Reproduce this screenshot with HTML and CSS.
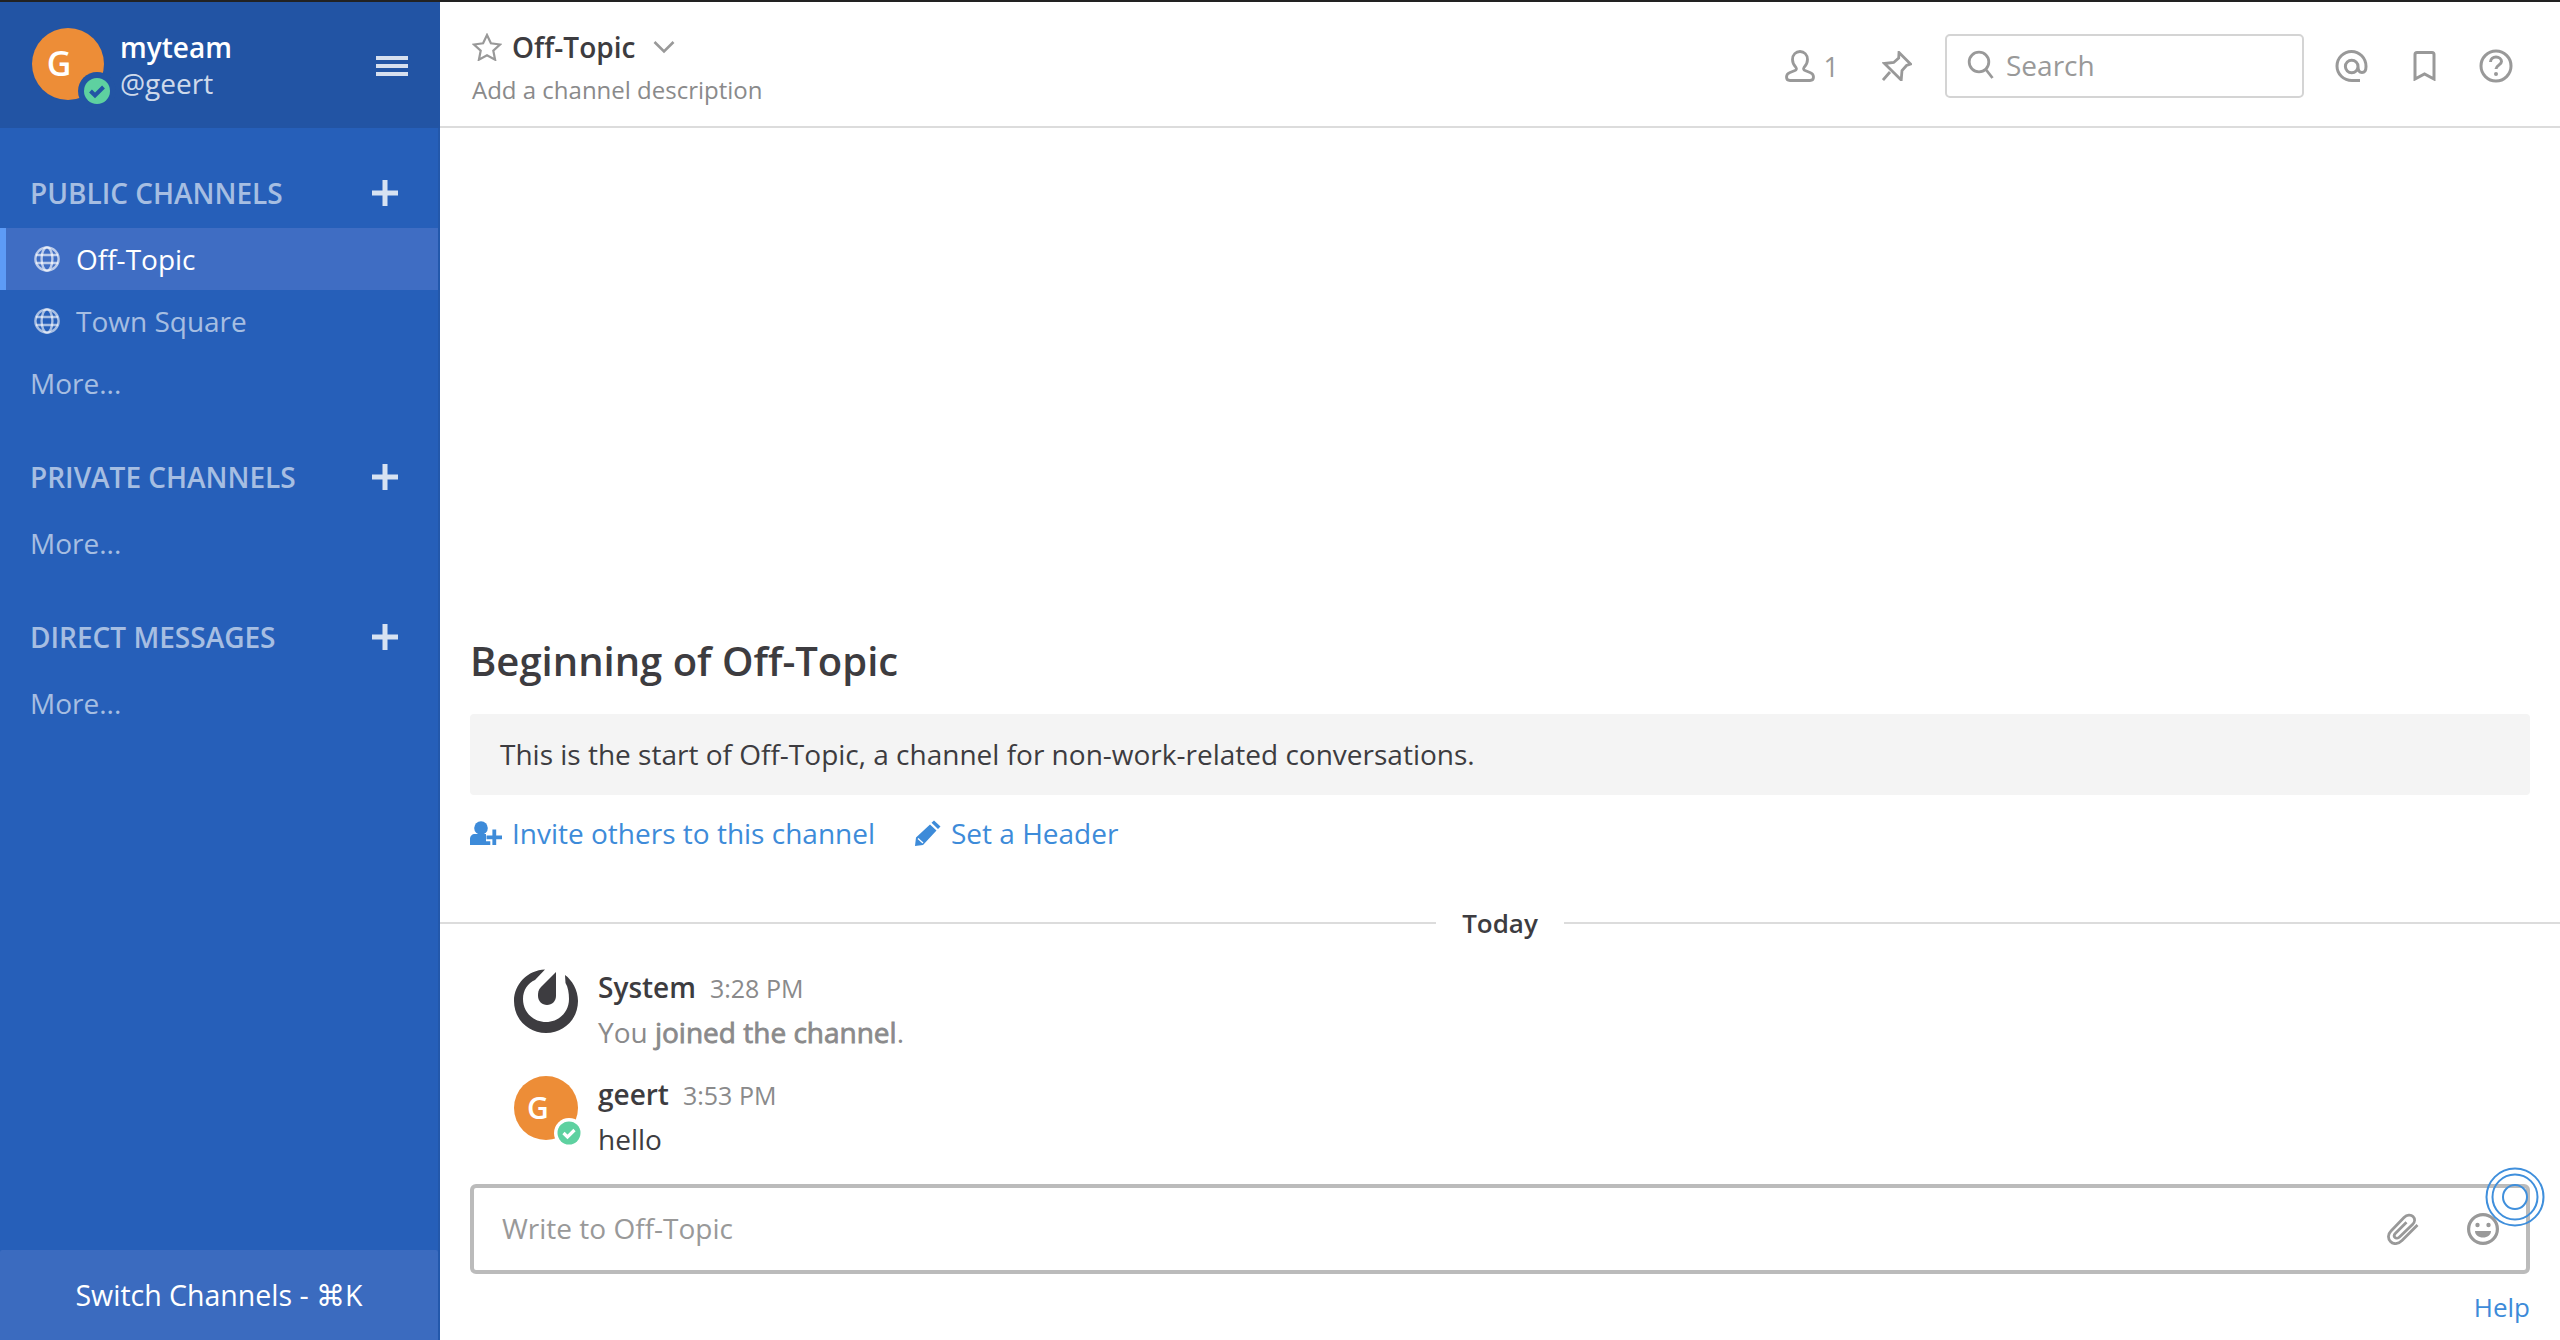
FILE: index.html
```html
<!DOCTYPE html>
<html lang="en">
<head>
<meta charset="utf-8">
<title>Off-Topic - myteam</title>
<link rel="stylesheet" href="styles.css">
</head>
<body>
<div class="app">
  <aside class="sidebar">
    <header class="side-head">
      <div class="avatar avatar-lg">
        <span class="avatar-letter">G</span>
        <svg class="badge badge-lg" viewBox="0 0 38 38"><circle cx="19" cy="19" r="19" fill="#2254a4"/><circle cx="19" cy="19" r="13" fill="#5ed1a0"/><path d="M12.500 19l4.500 4.500 8.500-8.500" fill="none" stroke="#2254a4" stroke-width="4"/></svg>
      </div>
      <div class="side-names">
        <div class="team">myteam</div>
        <div class="user">@geert</div>
      </div>
      <div class="burger"><span></span><span></span><span></span></div>
    </header>
    <nav class="side-nav">
      <section class="group">
        <div class="group-title"><span>PUBLIC CHANNELS</span><svg class="plus" viewBox="0 0 26 26"><path d="M13 0v26M0 13h26" stroke="currentColor" stroke-width="5"/></svg></div>
        <a class="chan chan-active">
          <svg class="globe" viewBox="0 0 26 26"><g fill="none" stroke="currentColor" stroke-width="2.400"><circle cx="13" cy="13" r="11.600"/><ellipse cx="13" cy="13" rx="5.400" ry="11.600"/><path d="M2 9h22M2 17h22"/></g></svg>
          <span>Off-Topic</span>
        </a>
        <a class="chan">
          <svg class="globe" viewBox="0 0 26 26"><g fill="none" stroke="currentColor" stroke-width="2.400"><circle cx="13" cy="13" r="11.600"/><ellipse cx="13" cy="13" rx="5.400" ry="11.600"/><path d="M2 9h22M2 17h22"/></g></svg>
          <span>Town Square</span>
        </a>
        <a class="more">More...</a>
      </section>
      <section class="group">
        <div class="group-title"><span>PRIVATE CHANNELS</span><svg class="plus" viewBox="0 0 26 26"><path d="M13 0v26M0 13h26" stroke="currentColor" stroke-width="5"/></svg></div>
        <a class="more">More...</a>
      </section>
      <section class="group">
        <div class="group-title"><span>DIRECT MESSAGES</span><svg class="plus" viewBox="0 0 26 26"><path d="M13 0v26M0 13h26" stroke="currentColor" stroke-width="5"/></svg></div>
        <a class="more">More...</a>
      </section>
    </nav>
    <footer class="switcher">Switch Channels - ⌘K</footer>
  </aside>

  <main class="main">
    <header class="chan-head">
      <div class="chan-info">
        <div class="chan-title">
          <svg class="star" viewBox="0 0 30 28"><path d="M15 2l3.900 8.300 9.100 1.200-6.700 6.200 1.800 9L15 22.200 6.900 26.700l1.800-9L2 11.500l9.100-1.200z" fill="none" stroke="#999" stroke-width="2.200"/></svg>
          <span class="chan-name">Off-Topic</span>
          <svg class="caret" viewBox="0 0 22 14"><path d="M1.500 2l9.500 9.500L20.500 2" fill="none" stroke="#999" stroke-width="2.600"/></svg>
        </div>
        <div class="chan-desc">Add a channel description</div>
      </div>
      <div class="head-tools">
        <div class="members">
          <svg class="i-user" viewBox="0 0 30 32"><path d="M15 1.500c-4 0-7.500 3-7.500 8 0 3.500 1.500 6 3.500 8 .8 1 .5 2.500-1 3L5 22.500C3 23.300 1.500 25 1.500 27c0 2.500 1.500 3.500 3.500 3.500h20c2 0 3.500-1 3.500-3.500 0-2-1.500-3.700-3.500-4.500l-5-2c-1.500-.5-1.800-2-1-3 2-2 3.500-4.500 3.500-8 0-5-3.500-8-7.500-8z" fill="none" stroke="#999" stroke-width="2.800"/></svg>
          <span>1</span>
        </div>
        <svg class="i-pin" viewBox="0 0 30 30"><path d="M17 1.500L28.500 13l-4 1.500-4.500 5-.8 9.500L2.500 12.500l9.200-1 5-4.500zM8 21l-7 8" fill="none" stroke="#999" stroke-width="2.800"/></svg>
        <div class="search">
          <svg class="i-search" viewBox="0 0 28 30"><circle cx="12" cy="12" r="9.800" fill="none" stroke="#999" stroke-width="2.800"/><path d="M18.500 19l7 9" stroke="#999" stroke-width="2.800"/></svg>
          <span>Search</span>
        </div>
        <svg class="i-at" viewBox="0 0 33 32"><path d="M25 30.500H17C8.500 30.500 2 24 2 16S8.500 1.500 16.500 1.500 31 8 31 16.500c0 3.500-1.500 6-4 6s-4-2.500-4-6M23 16.500a6.300 6.300 0 1 1-12.600 0 6.300 6.300 0 0 1 12.600 0z" fill="none" stroke="#999" stroke-width="3"/></svg>
        <svg class="i-mark" viewBox="0 0 23 30"><path d="M2 28V3.500q0-2 2-2h15q2 0 2 2V28l-9.500-5z" fill="none" stroke="#999" stroke-width="3"/></svg>
        <svg class="i-help" viewBox="0 0 34 34"><circle cx="17" cy="17" r="15" fill="none" stroke="#999" stroke-width="3"/><path d="M11.500 13c0-3 2.500-5 5.500-5s5.500 2 5.500 4.500c0 3.500-5.500 3.800-5.500 7.500" fill="none" stroke="#999" stroke-width="3"/><circle cx="17" cy="25" r="2" fill="#999"/></svg>
      </div>
    </header>

    <div class="timeline">
      <div class="intro">
        <h1 class="intro-title">Beginning of Off-Topic</h1>
        <p class="intro-box">This is the start of Off-Topic, a channel for non-work-related conversations.</p>
        <div class="intro-links">
          <a class="link">
            <svg class="i-invite" viewBox="0 0 32 24"><circle cx="11" cy="7" r="6.800" fill="#3d8bd9"/><path d="M0 24v-6c0-3 2-5 5-5h12c3 0 5 2 5 5v6z" fill="#3d8bd9"/><path d="M24.300 8v16M16 16.300h16" stroke="#fff" stroke-width="8"/><path d="M24.300 8.500v15.500M16.500 16.300H32" stroke="#3d8bd9" stroke-width="3.800"/></svg>
            <span>Invite others to this channel</span>
          </a>
          <a class="link">
            <svg class="i-pencil" viewBox="0 0 26 26"><path d="M19 .5l6.500 6-2.500 2.500-6.500-6.200zM15 4.500l6.500 6L8 25 0 26l1-8.500z" fill="#3d8bd9"/><path d="M3 18.500l5 4.500" stroke="#fff" stroke-width="1.300"/></svg>
            <span>Set a Header</span>
          </a>
        </div>
      </div>
      <div class="divider"><span>Today</span></div>
      <article class="post">
        <svg class="logo" viewBox="0 0 64 64"><path d="M31 .5C14 1 0 15 0 32c0 18 14 32 32 32s32-14 32-32C64 21 58 11 51 6l.5 8c2.500 4 3.500 10 3.500 16 0 13-10 23-23 23S9 43 9 30C9 21 14 14 21 11z" fill="#3d3c40"/><path d="M42 3L27 18c-3 3-3 6-3 9 0 5 4 9 9 9s9-4 9-9z" fill="#3d3c40"/></svg>
        <div class="post-body">
          <div class="post-meta"><strong>System</strong><time>3:28 PM</time></div>
          <div class="post-text post-sys">You <b>joined the channel</b>.</div>
        </div>
      </article>
      <article class="post">
        <div class="avatar avatar-md">
          <span class="avatar-letter">G</span>
          <svg class="badge badge-md" viewBox="0 0 30 30"><circle cx="15" cy="15" r="15" fill="#fff"/><circle cx="15" cy="15" r="11.500" fill="#5ed1a0"/><path d="M9.500 15l4 4 7-7" fill="none" stroke="#fff" stroke-width="3.200"/></svg>
        </div>
        <div class="post-body">
          <div class="post-meta"><strong>geert</strong><time>3:53 PM</time></div>
          <div class="post-text">hello</div>
        </div>
      </article>
    </div>

    <div class="composer">
      <div class="composer-box">
        <span class="placeholder">Write to Off-Topic</span>
        <svg class="i-clip" viewBox="0 0 32 32"><path d="M30.500 12L15 27.500c-4 4-9 4-11.500 1-3-3-2.500-7.500.5-10.500L17 4.500c3-3 7-3 9-1 2.300 2.300 2 5.500-.5 8L12.500 24c-1.500 1.500-3.500 1.500-4.500.5s-1-2.800.5-4.300l11-11" fill="none" stroke="#999" stroke-width="2.800"/></svg>
        <svg class="i-smile" viewBox="0 0 32 32"><circle cx="16" cy="16" r="14.400" fill="none" stroke="#999" stroke-width="3.200"/><circle cx="10.500" cy="12" r="2.200" fill="#999"/><circle cx="21.500" cy="12" r="2.200" fill="#999"/><path d="M8 18h16c0 4-3.500 6.500-8 6.500S8 22 8 18z" fill="#999"/></svg>
      </div>
      <div class="help-row"><a class="help">Help</a></div>
      <svg class="pulse" viewBox="0 0 60 60"><g fill="none" stroke="#3f8fdc" stroke-width="2"><circle cx="30" cy="30" r="28.500"/><circle cx="30" cy="30" r="22.500"/><circle cx="30" cy="30" r="12"/></g></svg>
    </div>
  </main>
</div>
</body>
</html>
```

FILE: styles.css
```css
* { box-sizing: border-box; }
html, body { margin: 0; height: 100%; }
body {
  font-family: "Open Sans", sans-serif;
  font-size: 28px;
  color: #3d3c40;
  background: #fff;
  border-top: 2px solid #222;
  overflow: hidden;
}
a { text-decoration: none; }
.app { display: flex; height: 1338px; }

/* sidebar */
.sidebar {
  width: 440px;
  flex: none;
  display: flex;
  flex-direction: column;
  background: #265fb9;
  border-right: 2px solid #2358ab;
  color: #fff;
}
.side-head {
  height: 126px;
  flex: none;
  display: flex;
  align-items: center;
  background: #2254a4;
  margin-right: -2px;
  padding: 0 32px;
}
.avatar {
  position: relative;
  flex: none;
  display: flex;
  align-items: center;
  justify-content: center;
  border-radius: 50%;
  background: #ed8d37;
  color: #fff;
}
.avatar-lg { width: 72px; height: 72px; margin-top: -2px; font-size: 34px; }
.avatar-md { width: 64px; height: 64px; font-size: 30px; }
.avatar-letter { font-weight: 600; }
.avatar-lg .avatar-letter { transform: translate(-9px, -1px); }
.avatar-md .avatar-letter { transform: translate(-8px, -1px); }
.badge { position: absolute; }
.badge-lg { width: 38px; height: 38px; right: -12px; bottom: -10px; }
.badge-md { width: 30px; height: 30px; right: -6px; bottom: -8px; }
.side-names { flex: 1; margin-left: 16px; line-height: 36px; }
.team { font-weight: 600; font-size: 28px; }
.user { color: rgba(255, 255, 255, .8); font-size: 28px; }
.burger { display: flex; flex-direction: column; gap: 4px; width: 32px; margin-top: 2px; }
.burger span { display: block; height: 4px; background: rgba(255, 255, 255, .82); }

.side-nav { flex: 1; padding-top: 34px; }
.group { margin-bottom: 32px; }
.group:last-child .more { margin-top: 4px; }
.group-title {
  height: 62px;
  margin-bottom: 4px;
  display: flex;
  align-items: center;
  justify-content: space-between;
  padding: 0 40px 0 30px;
  font-size: 28px;
  font-weight: 600;
  color: rgba(255, 255, 255, .6);
}
.plus { width: 26px; height: 26px; color: rgba(255, 255, 255, .82); }
.chan, .more {
  display: flex;
  align-items: center;
  height: 62px;
  color: rgba(255, 255, 255, .6);
  font-size: 28px;
}
.chan { padding-left: 34px; gap: 16px; }
.more { padding-left: 30px; }
.globe { width: 26px; height: 26px; flex: none; }
.chan-active {
  background: #3f6dc3;
  color: #fff;
  border-left: 6px solid #5d9bf6;
  padding-left: 28px;
}
.chan-active .globe { color: rgba(255, 255, 255, .65); }
.switcher {
  height: 90px;
  flex: none;
  display: flex;
  align-items: center;
  justify-content: center;
  background: #3b6bbf;
  font-weight: 500;
  font-size: 28.500px;
  border-radius: 2px 2px 0 0;
}

/* main column */
.main { flex: 1; min-width: 0; display: flex; flex-direction: column; position: relative; }
.chan-head {
  height: 126px;
  flex: none;
  display: flex;
  align-items: center;
  justify-content: space-between;
  border-bottom: 2px solid #dcdcdc;
  padding: 0 47px 0 32px;
}
.chan-info { padding-top: 7px; }
.chan-title { display: flex; align-items: center; height: 42px; }
.star { width: 30px; height: 28px; margin-right: 10px; }
.chan-name { font-size: 28px; font-weight: 600; }
.caret { width: 22px; height: 14px; margin-left: 18px; }
.chan-desc { font-size: 24px; color: #8a8a8b; line-height: 38px; margin-top: 3px; }
.head-tools { display: flex; align-items: center; padding-top: 4px; }
.members { display: flex; align-items: center; gap: 9px; color: #999; font-size: 27px; margin-right: 43px; }
.i-user { width: 30px; height: 32px; }
.i-pin { width: 30px; height: 30px; margin-right: 33px; }
.search {
  width: 359px;
  height: 64px;
  display: flex;
  align-items: center;
  gap: 11px;
  padding: 0 0 2px 20px;
  border: 2px solid #d4d4d4;
  border-radius: 5px;
  color: #999;
  font-size: 28px;
  margin-right: 31px;
}
.i-search { width: 28px; height: 30px; }
.i-at { width: 33px; height: 32px; margin-right: 45px; }
.i-mark { width: 23px; height: 30px; margin-right: 43px; }
.i-help { width: 34px; height: 34px; }

.timeline { flex: 1; min-height: 0; display: flex; flex-direction: column; justify-content: flex-end; }
.intro { padding: 0 30px; }
.intro-title { margin: 0; font-size: 40px; font-weight: 600; line-height: 54px; }
.intro-box {
  margin: 26px 0 0;
  height: 81px;
  display: flex;
  align-items: center;
  padding: 0 0 2px 30px;
  background: #f4f4f4;
  border-radius: 4px;
  font-size: 28px;
}
.intro-links { display: flex; gap: 40px; margin-top: 17px; height: 42px; align-items: center; }
.link { display: flex; align-items: center; gap: 10px; color: #3d8bd9; font-size: 28px; }
.i-invite { width: 32px; height: 24px; }
.i-pencil { width: 26px; height: 26px; }
.divider {
  margin-top: 51px;
  display: flex;
  align-items: center;
  gap: 26px;
  font-size: 26px;
  font-weight: 600;
}
.divider::before, .divider::after { content: ""; flex: 1; height: 2px; background: #dcdcdc; }
.post { display: flex; padding-left: 74px; gap: 20px; }
.divider + .post { margin-top: 28px; }
.post + .post { margin-top: 22px; }
.logo { width: 64px; height: 64px; flex: none; }
.post-body { line-height: 44px; margin-top: -4px; }
.post-meta { display: flex; align-items: baseline; gap: 14px; }
.post-meta strong { font-weight: 600; }
.post-meta time { font-size: 25px; color: #8a8a8b; }
.post-sys { color: #8a8a8b; }
.post-sys b { font-weight: 400; -webkit-text-stroke: .8px #8a8a8b; }

.composer { flex: none; padding: 23px 30px 0; position: relative; }
.composer-box {
  height: 90px;
  border: 4px solid #bbb;
  border-radius: 6px;
  display: flex;
  align-items: center;
  padding-left: 28px;
}
.placeholder { flex: 1; color: #999; font-size: 28px; margin-bottom: 2px; }
.i-clip { width: 32px; height: 32px; margin-right: 48px; }
.i-smile { width: 32px; height: 32px; margin-right: 27px; }
.help-row { height: 66px; display: flex; justify-content: flex-end; align-items: center; }
.help { color: #3d8bd9; font-size: 26px; }
.pulse { position: absolute; width: 60px; height: 60px; right: 15px; top: 6px; }
```
